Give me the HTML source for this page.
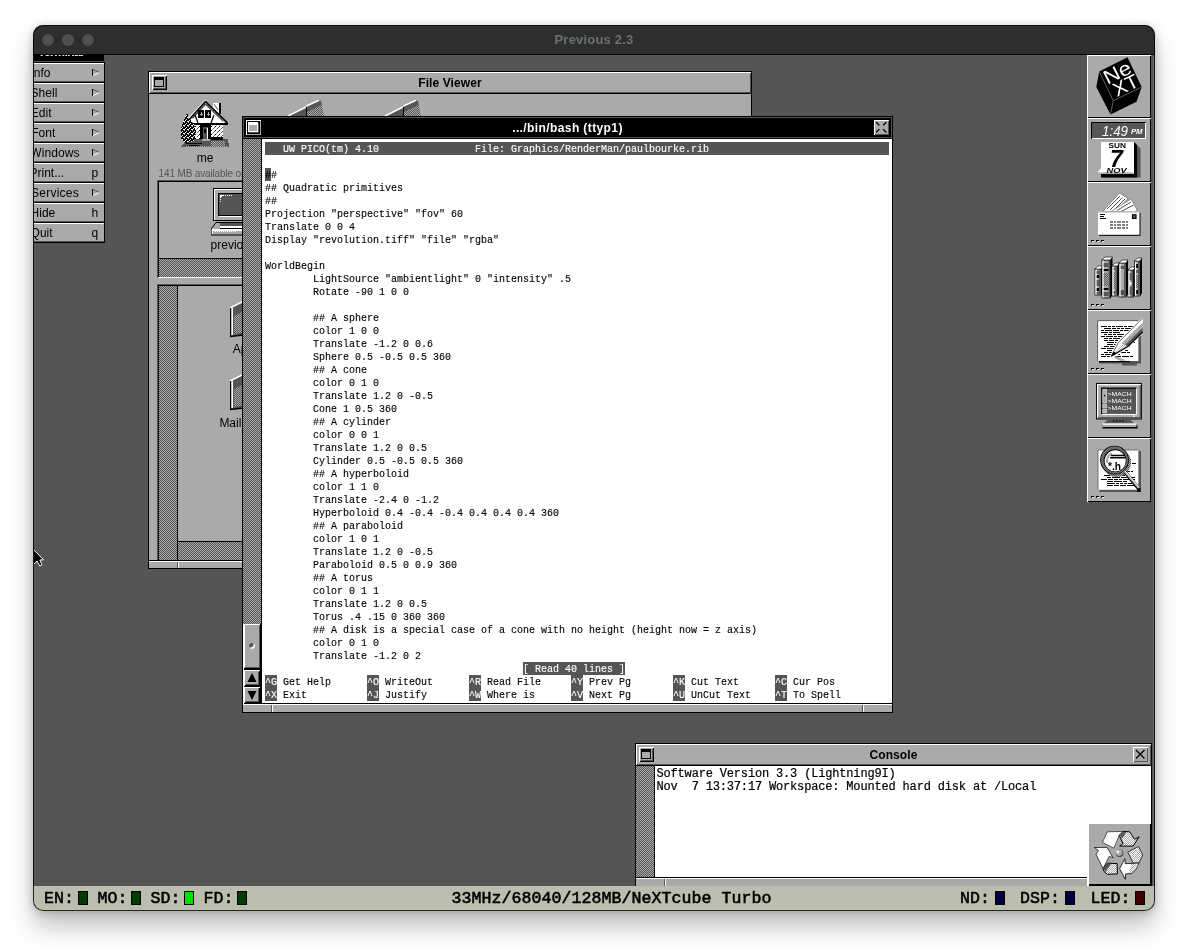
<!DOCTYPE html>
<html lang="en">
<head>
<meta charset="utf-8">
<title>Previous 2.3</title>
<style>
html,body{margin:0;padding:0;background:#fff;}
body{width:1188px;height:952px;position:relative;overflow:hidden;font-family:"Liberation Sans",sans-serif;font-size:12px;color:#000;}
.a{position:absolute;}
#shadow{left:33px;top:25px;width:1122px;height:886px;border-radius:10px;box-shadow:0 16px 24px rgba(0,0,0,.24),0 1px 9px rgba(0,0,0,.22);}
#win{left:33px;top:25px;width:1122px;height:886px;border-radius:10px;overflow:hidden;background:#555;}
#pg{left:-33px;top:-25px;width:1188px;height:952px;will-change:transform;}
/* macOS title bar */
#tbar{left:33px;top:25px;width:1122px;height:29px;background:#2d2f2f;}
#tbar .hl{left:0;top:0;width:100%;height:1px;background:#4a4c4c;}
.tl{width:12px;height:12px;border-radius:6px;background:#4e5050;top:9px;}
#ttl{left:0;top:0;width:100%;text-align:center;font-weight:bold;font-size:13px;line-height:29px;color:#6e7070;letter-spacing:.2px;}
#sep{left:33px;top:54px;width:1122px;height:1px;background:#000;}
/* NeXT desktop */
#desk{left:34px;top:55px;width:1117px;height:831px;background:#555;}
#rstrip{left:1151px;top:55px;width:4px;height:831px;background:#555;box-shadow:inset -2px 0 0 #686868;}
.dith{background:repeating-conic-gradient(#555 0 25%,#aaa 0 50%) 0 0/2px 2px;}
/* status bar */
#sbar{left:33px;top:886px;width:1122px;height:25px;background:#bcbdae;}
.st{font-family:"Liberation Mono",monospace;font-weight:normal;-webkit-text-stroke:.55px #000;font-size:16.6px;line-height:16px;top:891px;color:#000;white-space:pre;letter-spacing:.04px;}
.led{top:891px;width:8px;height:12px;border:1px solid #000;}
/* menu */
.mi{left:34px;width:70px;height:20px;background:#aaa;box-shadow:inset 0 1px 0 #fff,inset 0 -1px 0 #000,inset 0 -2px 0 #555;}
.mt{top:3px;line-height:14px;font-size:12px;white-space:pre;}
.mk{left:57.5px;top:3px;line-height:14px;font-size:12px;}
.mi svg{left:57px;top:6px;}
/* NeXT windows */
.nwin{background:#000;}
.ntb{left:1px;top:1px;height:21px;background:#aaa;box-shadow:inset 1px 1px 0 #fff,inset -1px -1px 0 #555;}
.ntb.act{background:#000;box-shadow:inset 1px 1px 0 #555,inset -1px -1px 0 #555;}
.ntt{left:0;top:.5px;width:100%;text-align:center;font-weight:bold;font-size:12px;line-height:21px;letter-spacing:.1px;}
.act .ntt{color:#fff;}
.btn{width:15px;height:15px;top:3px;}
.rb{height:7px;background:#aaa;box-shadow:inset 0 1px 0 #fff;}
.term{font-family:"Liberation Mono",monospace;white-space:pre;}
.r{font-size:10px;line-height:13px;height:13px;letter-spacing:0;-webkit-text-stroke:.12px currentColor;}
.rv{background:#555;color:#fff;}
.r span{position:relative;top:1px;}
.tile{left:1087px;width:64px;height:64px;background:#aaa;box-shadow:inset 1px 1px 0 #fff,inset -1px -1px 0 #000;}
</style>
</head>
<body>
<div id="shadow" class="a"></div>
<div id="win" class="a"><div id="pg" class="a">

<div id="desk" class="a"></div>
<div id="rstrip" class="a"></div>

<div class="a" style="left:34px;top:55px;width:70px;height:6px;background:#000"></div>
<div class="a" style="left:34px;top:61px;width:70px;height:1px;background:#555"></div>
<div class="a" style="left:34px;top:62px;width:71px;height:181px;background:#000"></div>
<div class="a" style="left:34px;top:55px;width:70px;height:1px;overflow:hidden"><div class="a" style="left:4px;top:-10px;color:#fff;font-weight:bold;font-size:12px;line-height:14px;white-space:pre;letter-spacing:-.5px">Terminal</div></div>
<div class="a mi" style="top:63px;overflow:hidden"><div class="a mt" style="left:-3.6px">Info</div><svg class="a" width="8" height="8" viewBox="0 0 8 8" shape-rendering="crispEdges"><path d="M1.5 0V7" stroke="#000" stroke-width="1" fill="none"/><path d="M2 0.5L8 3.3" stroke="#555" stroke-width="1" fill="none" shape-rendering="auto"/><path d="M2 6.6L8 3.8" stroke="#fff" stroke-width="1" fill="none" shape-rendering="auto"/></svg></div>
<div class="a mi" style="top:83px;overflow:hidden"><div class="a mt" style="left:-3.4px">Shell</div><svg class="a" width="8" height="8" viewBox="0 0 8 8" shape-rendering="crispEdges"><path d="M1.5 0V7" stroke="#000" stroke-width="1" fill="none"/><path d="M2 0.5L8 3.3" stroke="#555" stroke-width="1" fill="none" shape-rendering="auto"/><path d="M2 6.6L8 3.8" stroke="#fff" stroke-width="1" fill="none" shape-rendering="auto"/></svg></div>
<div class="a mi" style="top:103px;overflow:hidden"><div class="a mt" style="left:-3.2px">Edit</div><svg class="a" width="8" height="8" viewBox="0 0 8 8" shape-rendering="crispEdges"><path d="M1.5 0V7" stroke="#000" stroke-width="1" fill="none"/><path d="M2 0.5L8 3.3" stroke="#555" stroke-width="1" fill="none" shape-rendering="auto"/><path d="M2 6.6L8 3.8" stroke="#fff" stroke-width="1" fill="none" shape-rendering="auto"/></svg></div>
<div class="a mi" style="top:123px;overflow:hidden"><div class="a mt" style="left:-2.8px">Font</div><svg class="a" width="8" height="8" viewBox="0 0 8 8" shape-rendering="crispEdges"><path d="M1.5 0V7" stroke="#000" stroke-width="1" fill="none"/><path d="M2 0.5L8 3.3" stroke="#555" stroke-width="1" fill="none" shape-rendering="auto"/><path d="M2 6.6L8 3.8" stroke="#fff" stroke-width="1" fill="none" shape-rendering="auto"/></svg></div>
<div class="a mi" style="top:143px;overflow:hidden"><div class="a mt" style="left:-3.8px;letter-spacing:.1px">Windows</div><svg class="a" width="8" height="8" viewBox="0 0 8 8" shape-rendering="crispEdges"><path d="M1.5 0V7" stroke="#000" stroke-width="1" fill="none"/><path d="M2 0.5L8 3.3" stroke="#555" stroke-width="1" fill="none" shape-rendering="auto"/><path d="M2 6.6L8 3.8" stroke="#fff" stroke-width="1" fill="none" shape-rendering="auto"/></svg></div>
<div class="a mi" style="top:163px;overflow:hidden"><div class="a mt" style="left:-4.5px">Print...</div><div class="a mk">p</div></div>
<div class="a mi" style="top:183px;overflow:hidden"><div class="a mt" style="left:-3.0px;letter-spacing:.25px">Services</div><svg class="a" width="8" height="8" viewBox="0 0 8 8" shape-rendering="crispEdges"><path d="M1.5 0V7" stroke="#000" stroke-width="1" fill="none"/><path d="M2 0.5L8 3.3" stroke="#555" stroke-width="1" fill="none" shape-rendering="auto"/><path d="M2 6.6L8 3.8" stroke="#fff" stroke-width="1" fill="none" shape-rendering="auto"/></svg></div>
<div class="a mi" style="top:203px;overflow:hidden"><div class="a mt" style="left:-3.4px">Hide</div><div class="a mk">h</div></div>
<div class="a mi" style="top:223px;overflow:hidden"><div class="a mt" style="left:-3.4px">Quit</div><div class="a mk">q</div></div>


<div class="a nwin" id="fv" style="left:148px;top:71px;width:604px;height:498px;">
  <div class="a ntb" style="width:602px;">
    <div class="a ntt">File Viewer</div>
    <svg class="a btn" style="left:3px" width="15" height="15" viewBox="0 0 15 15" shape-rendering="crispEdges"><rect width="15" height="15" fill="#aaa"/><path d="M0 0H15V1H1V15H0Z" fill="#fff"/><path d="M15 1V15H1V14H14V1Z" fill="#000"/><path d="M14 2V14H2V13H13V2Z" fill="#555"/><rect x="2.5" y="2.5" width="9" height="9" fill="#aaa" stroke="#000" stroke-width="1"/><rect x="2" y="2" width="10" height="3" fill="#000"/></svg>
  </div>
  <div class="a" style="left:1px;top:23px;width:602px;height:466px;background:#aaa;overflow:hidden">
    <svg width="0" height="0" class="a" style="left:0;top:0"><defs>
<pattern id="pBW" width="2" height="2" patternUnits="userSpaceOnUse"><rect width="2" height="2" fill="#fff"/><rect width="1" height="1" fill="#000"/><rect x="1" y="1" width="1" height="1" fill="#000"/></pattern>
<pattern id="pWG" width="2" height="2" patternUnits="userSpaceOnUse"><rect width="2" height="2" fill="#fff"/><rect width="1" height="1" fill="#aaa"/><rect x="1" y="1" width="1" height="1" fill="#aaa"/></pattern>
<pattern id="pGD" width="2" height="2" patternUnits="userSpaceOnUse"><rect width="2" height="2" fill="#aaa"/><rect width="1" height="1" fill="#555"/><rect x="1" y="1" width="1" height="1" fill="#555"/></pattern>
<pattern id="pWD" width="2" height="2" patternUnits="userSpaceOnUse"><rect width="2" height="2" fill="#fff"/><rect width="1" height="1" fill="#555"/><rect x="1" y="1" width="1" height="1" fill="#555"/></pattern>
<pattern id="pTree" width="4" height="4" patternUnits="userSpaceOnUse"><rect width="4" height="4" fill="#000"/><rect x="0" y="0" width="1" height="1" fill="#fff"/><rect x="2" y="1" width="2" height="1" fill="#fff"/><rect x="1" y="3" width="1" height="1" fill="#fff"/><rect x="3" y="2" width="1" height="1" fill="#aaa"/></pattern>
<pattern id="pWall" width="4" height="4" patternUnits="userSpaceOnUse"><rect width="4" height="4" fill="#fff"/><rect x="0" y="0" width="1" height="1" fill="#555"/><rect x="2" y="2" width="1" height="1" fill="#000"/><rect x="3" y="1" width="1" height="1" fill="#aaa"/><rect x="1" y="3" width="1" height="1" fill="#555"/></pattern>
</defs></svg>
<svg class="a" style="left:32px;top:6px" width="48" height="48" viewBox="0 0 48 48" shape-rendering="crispEdges">
<polygon points="0,47 6,39 47,39 48,47" fill="#555"/>
<rect x="4" y="46" width="43" height="1" fill="url(#pGD)"/>
<rect x="30" y="41" width="14" height="5" fill="url(#pGD)"/>
<rect x="11" y="24" width="31" height="15" fill="url(#pWall)"/>
<rect x="19" y="25" width="11" height="14" fill="#000"/>
<rect x="22" y="27" width="5" height="12" fill="#555"/><rect x="26" y="28" width="1" height="11" fill="#fff"/><rect x="23" y="29" width="2" height="4" fill="#000"/>
<rect x="21" y="39" width="8" height="2" fill="#aaa"/>
<polygon points="24.5,2 10,18 10,24 43,24 43,21" fill="#fff"/>
<polygon points="32,3 39,3 39,14 32,8" fill="#fff"/><rect x="38" y="3" width="1.5" height="11" fill="#000"/><path d="M33 4L37 10" stroke="#555" stroke-width="1" shape-rendering="auto"/>
<path d="M24.5 0.4L8 18.2" stroke="#fff" stroke-width="1.3" shape-rendering="auto" fill="none"/>
<path d="M24.5 1.6L8.5 19.3M24.5 1.6L46.5 23" stroke="#000" stroke-width="1.7" shape-rendering="auto" fill="none"/>
<path d="M24.5 3.8L11.5 18.2M24.5 3.8L42.5 21" stroke="#555" stroke-width="1.8" shape-rendering="auto" fill="none"/>
<rect x="10" y="23" width="37" height="1.6" fill="#000"/>
<rect x="17" y="10" width="6" height="8" fill="#000"/><rect x="24" y="10" width="6" height="8" fill="#000"/>
<path d="M20 12V16M18.5 14H21.5M27 12V16M25.5 14H28.5" stroke="#aaa" stroke-width="1" fill="none"/>
<path d="M14 15L17 23M33 15L30 23" stroke="#000" stroke-width="1.2" shape-rendering="auto" fill="none"/>
<polygon points="6,13 8,18 13,24 15,33 13,41 4,43 0,38 0,28 3,20" fill="url(#pTree)"/>
<rect x="30" y="37" width="12" height="2.5" fill="#000"/>
<path d="M5 43h16M8 45h10" stroke="#000" stroke-width="1" fill="none"/>
</svg>
<div class="a" style="left:26px;top:56.5px;width:60px;text-align:center;line-height:14px;font-size:12px">me</div>
<div class="a" style="left:9.6px;top:74.3px;line-height:12px;font-size:10px;color:#555;white-space:pre;letter-spacing:-.15px">141 MB available on hard disk</div>
<!-- shelf folders -->
<svg class="a" style="left:131px;top:6px" width="48" height="48" viewBox="0 0 48 48">
<polygon points="8,16 26,7 26,42 8,44" fill="#555"/>
<polygon points="12,24 26,17 26,40 12,42" fill="url(#pGD)"/>
<polygon points="27,6.5 39,0.5 41,1 44,16 44,36 27,42" fill="url(#pGD)"/>
<polygon points="27,6.5 39,0.5 41,1 41.5,5 27,12" fill="#555"/>
<path d="M8 16L26 7" stroke="#fff" stroke-width="1.5"/>
<path d="M26.5 6L39 0.3" stroke="#fff" stroke-width="1.5"/>
<path d="M8.5 16V44M26.5 7V42" stroke="#000" stroke-width="1"/>
<path d="M10.2 16V43" stroke="#fff" stroke-width="1.6"/>
<path d="M8 44.5L26 42.5L44 36.5" stroke="#000" stroke-width="1.4" fill="none"/>
</svg><svg class="a" style="left:228px;top:6px" width="48" height="48" viewBox="0 0 48 48">
<polygon points="8,16 26,7 26,42 8,44" fill="#555"/>
<polygon points="12,24 26,17 26,40 12,42" fill="url(#pGD)"/>
<polygon points="27,6.5 39,0.5 41,1 44,16 44,36 27,42" fill="url(#pGD)"/>
<polygon points="27,6.5 39,0.5 41,1 41.5,5 27,12" fill="#555"/>
<path d="M8 16L26 7" stroke="#fff" stroke-width="1.5"/>
<path d="M26.5 6L39 0.3" stroke="#fff" stroke-width="1.5"/>
<path d="M8.5 16V44M26.5 7V42" stroke="#000" stroke-width="1"/>
<path d="M10.2 16V43" stroke="#fff" stroke-width="1.6"/>
<path d="M8 44.5L26 42.5L44 36.5" stroke="#000" stroke-width="1.4" fill="none"/>
</svg>
<!-- path box -->
<div class="a" style="left:8px;top:86px;width:586px;height:98px;background:#aaa;box-shadow:inset 1px 1px 0 #555,inset -1px -1px 0 #fff"></div>
<div class="a" style="left:9px;top:87px;width:584px;height:1px;background:#000"></div>
<div class="a" style="left:9px;top:87px;width:1px;height:96px;background:#000"></div>
<div class="a" style="left:10px;top:164px;width:583px;height:1px;background:#000"></div>
<div class="a dith" style="left:10px;top:165px;width:583px;height:18px"></div>
<svg class="a" style="left:62px;top:94px" width="48" height="48" viewBox="0 0 48 48" shape-rendering="crispEdges">
<rect x="2.5" y="0.5" width="42" height="32" fill="#aaa" stroke="#000" stroke-width="1"/>
<path d="M3 1.5H44M3.5 1V32" stroke="#fff" stroke-width="1.4" fill="none"/>
<rect x="7.5" y="5.5" width="33" height="22" fill="#555" stroke="#000" stroke-width="1"/>
<rect x="8" y="28" width="34" height="1.4" fill="#fff"/>
<path d="M9 7h4M9 8h2M9 9h1M14 7h1M16 7h1M18 7h1M20 7h1M9 11h1M9 13h1" stroke="#fff" stroke-width="1" fill="none"/>
<polygon points="0,41 5,34.5 47,34.5 47,47 0,47" fill="#aaa" stroke="#000" stroke-width="1" shape-rendering="auto"/>
<rect x="9" y="35" width="30" height="3" fill="#555"/>
<rect x="9" y="37.5" width="32" height="2" fill="#fff"/><rect x="9" y="39.5" width="32" height="1" fill="#000"/>
<rect x="1" y="41" width="46" height="1.5" fill="#fff"/>
<path d="M1.5 41V46" stroke="#fff" stroke-width="1" fill="none"/>
<path d="M4 43.5h22" stroke="#fff" stroke-width="1" stroke-dasharray="1 1" fill="none"/>
</svg>
<div class="a" style="left:61.6px;top:144px;line-height:14px;font-size:12px;white-space:pre">previous</div>
<!-- browser box -->
<div class="a" style="left:8px;top:190px;width:586px;height:280px;background:#aaa;box-shadow:inset 1px 1px 0 #555,inset -1px -1px 0 #fff"></div>
<div class="a" style="left:9px;top:191px;width:584px;height:1px;background:#000"></div>
<div class="a" style="left:9px;top:191px;width:1px;height:280px;background:#000"></div>
<div class="a dith" style="left:10px;top:192px;width:18px;height:280px"></div>
<div class="a" style="left:28px;top:192px;width:1px;height:280px;background:#000"></div>
<div class="a" style="left:29px;top:447px;width:565px;height:1px;background:#000"></div>
<div class="a dith" style="left:29px;top:448px;width:565px;height:20px"></div>
<svg class="a" style="left:73.4px;top:198.4px" width="48" height="48" viewBox="0 0 48 48">
<polygon points="8,16 26,7 26,42 8,44" fill="#555"/>
<polygon points="12,24 26,17 26,40 12,42" fill="url(#pGD)"/>
<polygon points="27,6.5 39,0.5 41,1 44,16 44,36 27,42" fill="url(#pGD)"/>
<polygon points="27,6.5 39,0.5 41,1 41.5,5 27,12" fill="#555"/>
<path d="M8 16L26 7" stroke="#fff" stroke-width="1.5"/>
<path d="M26.5 6L39 0.3" stroke="#fff" stroke-width="1.5"/>
<path d="M8.5 16V44M26.5 7V42" stroke="#000" stroke-width="1"/>
<path d="M10.2 16V43" stroke="#fff" stroke-width="1.6"/>
<path d="M8 44.5L26 42.5L44 36.5" stroke="#000" stroke-width="1.4" fill="none"/>
</svg>
<div class="a" style="left:67.4px;top:248px;width:60px;text-align:center;line-height:14px;font-size:12px">Apps</div>
<svg class="a" style="left:73.4px;top:271.4px" width="48" height="48" viewBox="0 0 48 48">
<polygon points="8,16 26,7 26,42 8,44" fill="#555"/>
<polygon points="12,24 26,17 26,40 12,42" fill="url(#pGD)"/>
<polygon points="27,6.5 39,0.5 41,1 44,16 44,36 27,42" fill="url(#pGD)"/>
<polygon points="27,6.5 39,0.5 41,1 41.5,5 27,12" fill="#555"/>
<path d="M8 16L26 7" stroke="#fff" stroke-width="1.5"/>
<path d="M26.5 6L39 0.3" stroke="#fff" stroke-width="1.5"/>
<path d="M8.5 16V44M26.5 7V42" stroke="#000" stroke-width="1"/>
<path d="M10.2 16V43" stroke="#fff" stroke-width="1.6"/>
<path d="M8 44.5L26 42.5L44 36.5" stroke="#000" stroke-width="1.4" fill="none"/>
</svg>
<div class="a" style="left:57.4px;top:321.5px;width:80px;text-align:center;line-height:14px;font-size:12px">Mailboxes</div>

  </div>
  <div class="a rb" style="left:1px;top:490px;width:602px;"></div>
  <div class="a" style="left:29px;top:491px;width:1px;height:6px;background:#555"></div>
  <div class="a" style="left:30px;top:491px;width:1px;height:6px;background:#fff"></div>
  <div class="a" style="left:573px;top:491px;width:1px;height:6px;background:#555"></div>
  <div class="a" style="left:574px;top:491px;width:1px;height:6px;background:#fff"></div>
</div>

<div class="a nwin" id="tw" style="left:242px;top:116px;width:651px;height:597px;">
  <div class="a ntb act" style="width:649px;"><div class="a ntt" style="letter-spacing:.4px">.../bin/bash (ttyp1)</div>
    <svg class="a btn" style="left:3px" width="15" height="15" viewBox="0 0 15 15" shape-rendering="crispEdges"><rect width="15" height="15" fill="#000"/><path d="M0 0H15V1H1V15H0Z" fill="#fff"/><path d="M15 1V15H1V14H14V1Z" fill="#aaa"/><rect x="2.5" y="2.5" width="9" height="9" fill="#aaa" stroke="#fff" stroke-width="1"/><rect x="2" y="2" width="10" height="3" fill="#fff"/><path d="M12 3V12H3" fill="none" stroke="#555" stroke-width="1"/></svg>
    <svg class="a btn" style="left:631px" width="15" height="15" viewBox="0 0 15 15" shape-rendering="crispEdges"><rect width="15" height="15" fill="#aaa"/><path d="M0 0H15V1H1V15H0Z" fill="#fff"/><path d="M15 1V15H1V14H14V1Z" fill="#555"/><path d="M2.5 2.5L5 5M12 2.5L9.5 5M2.5 12L5 9.5M12 12L9.5 9.5" stroke="#000" stroke-width="1.2" stroke-linecap="round" shape-rendering="auto"/></svg>
  </div>
  <div class="a dith" style="left:1px;top:23px;width:18px;height:565px"></div>
  <div class="a" style="left:1px;top:508px;width:18px;height:80px;background:#000"></div><div class="a" style="left:1px;top:508px;width:1px;height:80px;background:#fff"></div><div class="a" style="left:2px;top:508px;width:16px;height:44px;background:#aaa;box-shadow:inset 1px 1px 0 #fff,inset -1px -1px 0 #555"></div>
  <div class="a" style="left:7px;top:527px;width:6px;height:6px;border-radius:3px;background:#555;box-shadow:inset -1.5px -1.5px 0 #fff"></div>
  <svg class="a" style="left:2px;top:554px" width="16" height="16" viewBox="0 0 16 16" shape-rendering="crispEdges"><rect width="16" height="16" fill="#aaa"/><path d="M0 0H16V1H1V16H0Z" fill="#fff"/><path d="M16 1V16H1V15H15V1Z" fill="#000"/><path d="M14 2V14H2" fill="none" stroke="#555"/><polygon points="8,3 12.5,12 3.5,12" fill="#000" shape-rendering="auto"/></svg>
  <svg class="a" style="left:2px;top:571px" width="16" height="16" viewBox="0 0 16 16" shape-rendering="crispEdges"><rect width="16" height="16" fill="#aaa"/><path d="M0 0H16V1H1V16H0Z" fill="#fff"/><path d="M16 1V16H1V15H15V1Z" fill="#000"/><path d="M14 2V14H2" fill="none" stroke="#555"/><polygon points="8,13 12.5,4 3.5,4" fill="#000" shape-rendering="auto"/></svg>
  <div class="a term" id="tt" style="left:20px;top:23px;width:630px;height:564px;background:#fff;overflow:hidden">
<div class="a r rv" style="top:3px;left:3px;width:624px"><span>   UW PICO(tm) 4.10                File: Graphics/RenderMan/paulbourke.rib</span></div>
<div class="a" style="left:3px;top:29px;width:6px;height:13px;background:#555"></div>
<div class="a r" style="top:29px;left:3px"><span>##</span></div>
<div class="a r" style="top:42px;left:3px"><span>## Quadratic primitives</span></div>
<div class="a r" style="top:55px;left:3px"><span>##</span></div>
<div class="a r" style="top:68px;left:3px"><span>Projection "perspective" "fov" 60</span></div>
<div class="a r" style="top:81px;left:3px"><span>Translate 0 0 4</span></div>
<div class="a r" style="top:94px;left:3px"><span>Display "revolution.tiff" "file" "rgba"</span></div>
<div class="a r" style="top:120px;left:3px"><span>WorldBegin</span></div>
<div class="a r" style="top:133px;left:3px"><span>        LightSource "ambientlight" 0 "intensity" .5</span></div>
<div class="a r" style="top:146px;left:3px"><span>        Rotate -90 1 0 0</span></div>
<div class="a r" style="top:172px;left:3px"><span>        ## A sphere</span></div>
<div class="a r" style="top:185px;left:3px"><span>        color 1 0 0</span></div>
<div class="a r" style="top:198px;left:3px"><span>        Translate -1.2 0 0.6</span></div>
<div class="a r" style="top:211px;left:3px"><span>        Sphere 0.5 -0.5 0.5 360</span></div>
<div class="a r" style="top:224px;left:3px"><span>        ## A cone</span></div>
<div class="a r" style="top:237px;left:3px"><span>        color 0 1 0</span></div>
<div class="a r" style="top:250px;left:3px"><span>        Translate 1.2 0 -0.5</span></div>
<div class="a r" style="top:263px;left:3px"><span>        Cone 1 0.5 360</span></div>
<div class="a r" style="top:276px;left:3px"><span>        ## A cylinder</span></div>
<div class="a r" style="top:289px;left:3px"><span>        color 0 0 1</span></div>
<div class="a r" style="top:302px;left:3px"><span>        Translate 1.2 0 0.5</span></div>
<div class="a r" style="top:315px;left:3px"><span>        Cylinder 0.5 -0.5 0.5 360</span></div>
<div class="a r" style="top:328px;left:3px"><span>        ## A hyperboloid</span></div>
<div class="a r" style="top:341px;left:3px"><span>        color 1 1 0</span></div>
<div class="a r" style="top:354px;left:3px"><span>        Translate -2.4 0 -1.2</span></div>
<div class="a r" style="top:367px;left:3px"><span>        Hyperboloid 0.4 -0.4 -0.4 0.4 0.4 0.4 360</span></div>
<div class="a r" style="top:380px;left:3px"><span>        ## A paraboloid</span></div>
<div class="a r" style="top:393px;left:3px"><span>        color 1 0 1</span></div>
<div class="a r" style="top:406px;left:3px"><span>        Translate 1.2 0 -0.5</span></div>
<div class="a r" style="top:419px;left:3px"><span>        Paraboloid 0.5 0 0.9 360</span></div>
<div class="a r" style="top:432px;left:3px"><span>        ## A torus</span></div>
<div class="a r" style="top:445px;left:3px"><span>        color 0 1 1</span></div>
<div class="a r" style="top:458px;left:3px"><span>        Translate 1.2 0 0.5</span></div>
<div class="a r" style="top:471px;left:3px"><span>        Torus .4 .15 0 360 360</span></div>
<div class="a r" style="top:484px;left:3px"><span>        ## A disk is a special case of a cone with no height (height now = z axis)</span></div>
<div class="a r" style="top:497px;left:3px"><span>        color 0 1 0</span></div>
<div class="a r" style="top:510px;left:3px"><span>        Translate -1.2 0 2</span></div>
<div class="a r rv" style="top:523px;left:261px;width:102px"><span>[ Read 40 lines ]</span></div>
<div class="a r rv" style="top:536px;left:3px;width:12px"><span>^G</span></div><div class="a r" style="top:536px;left:21px"><span>Get Help</span></div>
<div class="a r rv" style="top:536px;left:105px;width:12px"><span>^O</span></div><div class="a r" style="top:536px;left:123px"><span>WriteOut</span></div>
<div class="a r rv" style="top:536px;left:207px;width:12px"><span>^R</span></div><div class="a r" style="top:536px;left:225px"><span>Read File</span></div>
<div class="a r rv" style="top:536px;left:309px;width:12px"><span>^Y</span></div><div class="a r" style="top:536px;left:327px"><span>Prev Pg</span></div>
<div class="a r rv" style="top:536px;left:411px;width:12px"><span>^K</span></div><div class="a r" style="top:536px;left:429px"><span>Cut Text</span></div>
<div class="a r rv" style="top:536px;left:513px;width:12px"><span>^C</span></div><div class="a r" style="top:536px;left:531px"><span>Cur Pos</span></div>
<div class="a r rv" style="top:549px;left:3px;width:12px"><span>^X</span></div><div class="a r" style="top:549px;left:21px"><span>Exit</span></div>
<div class="a r rv" style="top:549px;left:105px;width:12px"><span>^J</span></div><div class="a r" style="top:549px;left:123px"><span>Justify</span></div>
<div class="a r rv" style="top:549px;left:207px;width:12px"><span>^W</span></div><div class="a r" style="top:549px;left:225px"><span>Where is</span></div>
<div class="a r rv" style="top:549px;left:309px;width:12px"><span>^V</span></div><div class="a r" style="top:549px;left:327px"><span>Next Pg</span></div>
<div class="a r rv" style="top:549px;left:411px;width:12px"><span>^U</span></div><div class="a r" style="top:549px;left:429px"><span>UnCut Text</span></div>
<div class="a r rv" style="top:549px;left:513px;width:12px"><span>^T</span></div><div class="a r" style="top:549px;left:531px"><span>To Spell</span></div>
  </div>
  <div class="a rb" style="left:1px;top:588px;width:649px;height:8px"></div>
  <div class="a" style="left:29px;top:589px;width:1px;height:7px;background:#555"></div><div class="a" style="left:30px;top:589px;width:1px;height:7px;background:#fff"></div>
  <div class="a" style="left:620px;top:589px;width:1px;height:7px;background:#555"></div><div class="a" style="left:621px;top:589px;width:1px;height:7px;background:#fff"></div>
</div>

<div class="a nwin" id="cw" style="left:635px;top:743px;width:517px;height:143px;">
  <div class="a ntb" style="width:515px;"><div class="a ntt">Console</div>
    <svg class="a btn" style="left:3px" width="15" height="15" viewBox="0 0 15 15" shape-rendering="crispEdges"><rect width="15" height="15" fill="#aaa"/><path d="M0 0H15V1H1V15H0Z" fill="#fff"/><path d="M15 1V15H1V14H14V1Z" fill="#000"/><path d="M14 2V14H2V13H13V2Z" fill="#555"/><rect x="2.5" y="2.5" width="9" height="9" fill="#aaa" stroke="#000" stroke-width="1"/><rect x="2" y="2" width="10" height="3" fill="#000"/></svg>
    <svg class="a btn" style="left:497px" width="15" height="15" viewBox="0 0 15 15" shape-rendering="crispEdges"><rect width="15" height="15" fill="#aaa"/><path d="M0 0H15V1H1V15H0Z" fill="#fff"/><path d="M15 1V15H1V14H14V1Z" fill="#555"/><path d="M3 3L11.5 11.5M11.5 3L3 11.5" stroke="#000" stroke-width="1.3" shape-rendering="auto"/></svg>
  </div>
  <div class="a dith" style="left:1px;top:23px;width:18px;height:111px"></div>
  <div class="a" style="left:20px;top:23px;width:496px;height:111px;background:#fff;overflow:hidden;font-family:'Liberation Mono',monospace;font-size:12px;line-height:13px;white-space:pre;letter-spacing:-.17px;-webkit-text-stroke:.2px #000"><div class="a" style="left:1.5px;top:1.5px">Software Version 3.3 (Lightning9I)
Nov  7 13:37:17 Workspace: Mounted hard disk at /Local</div></div>
  <div class="a rb" style="left:1px;top:135px;width:515px;height:8px"></div>
  <div class="a" style="left:29px;top:136px;width:1px;height:7px;background:#555"></div><div class="a" style="left:30px;top:136px;width:1px;height:7px;background:#fff"></div>
</div>

<div class="a tile" id="t0" style="top:55px;height:63px"><svg class="a" style="left:0;top:0" width="64" height="63" viewBox="0 0 64 63">
<polygon points="40.5,2.2 54.7,32 49.5,46.7 23.5,59.4 9.3,32 12.2,16.4" fill="#000"/>
<path d="M12.2 16.4L26.3 45.7L54.7 32M26.3 45.7L23.5 59.4" stroke="#777" stroke-width=".8" fill="none"/>
<g transform="translate(12.2,16.4) rotate(-26.6)" fill="#fff" font-family="Liberation Sans, sans-serif" font-size="19.5">
<text x="1.5" y="15.8" textLength="28.5" lengthAdjust="spacingAndGlyphs">Ne</text>
<text x="4.5" y="31" textLength="26" lengthAdjust="spacingAndGlyphs">XT</text>
</g>
</svg></div>
<div class="a tile" id="t1" style="top:118px;height:64px"><div class="a" style="left:4px;top:4px;width:55px;height:17px;background:#555;box-shadow:inset 1px 1px 0 #000,inset -1px -1px 0 #fff"></div>
<svg class="a" style="left:0;top:0" width="64" height="64" viewBox="0 0 64 64">
<g fill="#fff" font-family="Liberation Sans, sans-serif" font-style="italic">
<text x="15" y="17.6" font-size="14" textLength="26" lengthAdjust="spacingAndGlyphs">1:49</text>
<text x="44" y="16" font-size="7.5" font-weight="bold" textLength="11.5" lengthAdjust="spacingAndGlyphs">PM</text>
</g>
<polygon points="47,24 53.5,30.5 53.5,59.5 18,59.5 14,56 47,56" fill="#555"/>
<polygon points="47,24 50,27 50,59.5 14,59.5 14,56 47,56" fill="#000"/>
<polygon points="14,24 47,24 47,56 45.5,54.5 10.5,54.5 14,50" fill="#fff"/>
<path d="M12 55.3H46" stroke="#aaa" stroke-width="1"/>
<g fill="#000" font-family="Liberation Sans, sans-serif" font-weight="bold" text-anchor="middle">
<text x="30.3" y="29.9" font-size="7" textLength="17.5" lengthAdjust="spacingAndGlyphs">SUN</text>
<text x="29.5" y="48.8" font-size="23" font-style="italic">7</text>
<text x="29.6" y="54.9" font-size="7" font-style="italic" textLength="20" lengthAdjust="spacingAndGlyphs">NOV</text>
</g>
</svg></div>
<div class="a tile" id="t2" style="top:182px;height:64px"><svg class="a" style="left:0;top:0" width="64" height="64" viewBox="0 0 64 64">
<polygon points="16,29 32.4,11 41,16.5 28,30" fill="#fff" stroke="#555" stroke-width=".6"/>
<path d="M20 27L33 14M23 28L35.5 15.5M26 29L38 17" stroke="#000" stroke-width=".7"/>
<polygon points="24,29.5 44.1,16.8 50,27.8 48,30" fill="#fff" stroke="#555" stroke-width=".6"/>
<path d="M30 28.5L44 20M34 29.5L46.5 23" stroke="#000" stroke-width=".7"/>
<rect x="12" y="30.7" width="41.5" height="23.1" fill="#000"/>
<rect x="11" y="29.7" width="41.5" height="23.1" fill="#fff"/>
<rect x="11" y="29.7" width="41.5" height=".8" fill="#aaa"/>
<rect x="44.9" y="32.2" width="4.7" height="4.8" fill="#000"/><rect x="46" y="33.3" width="2.5" height="2.6" fill="#555"/>
<path d="M13 32.5h5M13 34.5h4M13 36.5h6" stroke="#000" stroke-width="1"/>
<path d="M23 40h18M23 43h19M23 46h18" stroke="#000" stroke-width="1.2" stroke-dasharray="3 1 2 1 4 1"/>
<path d="M4 58h3v2h-3zM9 58h3v2h-3zM14 58h3v2h-3z" fill="#000" shape-rendering="crispEdges"/><path d="M5 59h2v1h-2zM10 59h2v1h-2zM15 59h2v1h-2z" fill="#fff" shape-rendering="crispEdges"/>
</svg></div>
<div class="a tile" id="t3" style="top:246px;height:64px"><svg class="a" style="left:0;top:0" width="64" height="64" viewBox="0 0 64 64"><rect x="8" y="23" width="6" height="26" fill="#aaa" stroke="#000" stroke-width=".8"/><rect x="8.4" y="23.4" width="1.3" height="25.2" fill="#fff"/><rect x="12" y="23.4" width="1.6" height="25.2" fill="#555"/><rect x="9.7" y="25" width="2.3" height="3" fill="#555"/><rect x="9.7" y="29" width="2.3" height="3" fill="#000"/><rect x="9.7" y="34" width="2.3" height="6" fill="#555"/><rect x="9.7" y="42" width="2.3" height="3" fill="#000"/><rect x="9.7" y="46" width="2.3" height="2" fill="#555"/><polygon points="8,23 11,20 16,20 14,23" fill="#fff" stroke="#000" stroke-width=".6"/><polygon points="14,23 16,20 16,46 14,49" fill="#000"/><rect x="15" y="14" width="8.5" height="38" fill="#aaa" stroke="#000" stroke-width=".8"/><rect x="15.4" y="14.4" width="1.3" height="37.2" fill="#fff"/><rect x="21.5" y="14.4" width="1.6" height="37.2" fill="#555"/><rect x="16.7" y="17" width="4.8" height="4" fill="#555"/><rect x="16.7" y="23" width="4.8" height="2" fill="#000"/><rect x="16.7" y="27" width="4.8" height="13" fill="url(#pGD)"/><rect x="16.7" y="42" width="4.8" height="2" fill="#000"/><rect x="16.7" y="46" width="4.8" height="4" fill="#555"/><polygon points="15,14 18,11 25.5,11 23.5,14" fill="#fff" stroke="#000" stroke-width=".6"/><polygon points="23.5,14 25.5,11 25.5,49 23.5,52" fill="#000"/><rect x="25" y="20" width="5.5" height="30" fill="#aaa" stroke="#000" stroke-width=".8"/><rect x="25.4" y="20.4" width="1.3" height="29.2" fill="#fff"/><rect x="28.5" y="20.4" width="1.6" height="29.2" fill="#555"/><rect x="26.7" y="22" width="1.7999999999999998" height="2" fill="#555"/><rect x="26.7" y="26" width="1.7999999999999998" height="17" fill="url(#pGD)"/><rect x="26.7" y="45" width="1.7999999999999998" height="3" fill="#555"/><polygon points="25,20 28,17 32.5,17 30.5,20" fill="#fff" stroke="#000" stroke-width=".6"/><polygon points="30.5,20 32.5,17 32.5,47 30.5,50" fill="#000"/><rect x="32" y="17" width="7" height="34" fill="#aaa" stroke="#000" stroke-width=".8"/><rect x="32.4" y="17.4" width="1.3" height="33.2" fill="#fff"/><rect x="37" y="17.4" width="1.6" height="33.2" fill="#555"/><rect x="33.7" y="20" width="3.3" height="3" fill="#555"/><rect x="33.7" y="25" width="3.3" height="18" fill="#aaa"/><rect x="33.7" y="44" width="3.3" height="5" fill="#555"/><polygon points="32,17 35,14 41,14 39,17" fill="#fff" stroke="#000" stroke-width=".6"/><polygon points="39,17 41,14 41,48 39,51" fill="#000"/><rect x="41" y="24" width="5.5" height="27" fill="#aaa" stroke="#000" stroke-width=".8"/><rect x="41.4" y="24.4" width="1.3" height="26.2" fill="#fff"/><rect x="44.5" y="24.4" width="1.6" height="26.2" fill="#555"/><rect x="42.7" y="27" width="1.7999999999999998" height="7" fill="#555"/><rect x="42.7" y="36" width="1.7999999999999998" height="3" fill="#fff"/><rect x="42.7" y="41" width="1.7999999999999998" height="8" fill="#555"/><polygon points="41,24 44,21 48.5,21 46.5,24" fill="#fff" stroke="#000" stroke-width=".6"/><polygon points="46.5,24 48.5,21 48.5,48 46.5,51" fill="#000"/><rect x="47.5" y="15" width="5.5" height="35" fill="#aaa" stroke="#000" stroke-width=".8"/><rect x="47.9" y="15.4" width="1.3" height="34.2" fill="#fff"/><rect x="51" y="15.4" width="1.6" height="34.2" fill="#555"/><rect x="49.2" y="18" width="1.7999999999999998" height="4" fill="#000"/><rect x="49.2" y="24" width="1.7999999999999998" height="3" fill="#555"/><rect x="49.2" y="29" width="1.7999999999999998" height="13" fill="url(#pGD)"/><rect x="49.2" y="44" width="1.7999999999999998" height="4" fill="#000"/><polygon points="47.5,15 50.5,12 55,12 53,15" fill="#fff" stroke="#000" stroke-width=".6"/><polygon points="53,15 55,12 55,47 53,50" fill="#000"/><path d="M4 58h3v2h-3zM9 58h3v2h-3zM14 58h3v2h-3z" fill="#000" shape-rendering="crispEdges"/><path d="M5 59h2v1h-2zM10 59h2v1h-2zM15 59h2v1h-2z" fill="#fff" shape-rendering="crispEdges"/></svg></div>
<div class="a tile" id="t4" style="top:310px;height:64px"><svg class="a" style="left:0;top:0" width="64" height="64" viewBox="0 0 64 64"><polygon points="51.3,26 54,26 54,53.5 50,53.5 50,55.5 35,55.5 35,53.5 12,53.5 12,51 51.3,51" fill="#555"/><rect x="12" y="51" width="31" height="1.2" fill="#000"/><rect x="10.1" y="10.1" width="41.2" height="40.9" fill="#fff"/><path d="M10.6 51V10.6H51.3" stroke="#555" stroke-width="1" fill="none"/><path d="M14 16.5h6M21 16.5h3M25 16.5h3M29 16.5h7M37 16.5h3M41 16.5h5M17 18.5h7M25 18.5h4M30 18.5h3M34 18.5h3M38 18.5h6M45 18.5h3M14 20.5h3M18 20.5h7M26 20.5h6M33 20.5h3M37 20.5h7M45 20.5h3M14 22.5h7M22 22.5h3M26 22.5h7M17 24.5h3M21 24.5h4M26 24.5h3M30 24.5h7M38 24.5h4M14 26.5h4M19 26.5h7M27 26.5h3M31 26.5h7M39 26.5h4M17 28.5h4M22 28.5h3M26 28.5h7M17 30.5h4M22 30.5h5M28 30.5h3M32 30.5h2M20 32.5h7M28 32.5h3M32 32.5h7M40 32.5h4M45 32.5h3M20 34.5h6M27 34.5h5M33 34.5h6M17 36.5h5M23 36.5h5M29 36.5h4M34 36.5h4M39 36.5h4M14 38.5h5M20 38.5h7M28 38.5h6M35 38.5h4M20 40.5h5M26 40.5h7M34 40.5h3M38 40.5h3M17 42.5h4M22 42.5h5M28 42.5h4M33 42.5h6M40 42.5h3M14 44.5h3M18 44.5h7M26 44.5h7M14 46.5h5M20 46.5h7M28 46.5h6M35 46.5h7M43 46.5h3" stroke="#000" stroke-width="1" fill="none" shape-rendering="crispEdges"/><polygon points="24.5,46.8 30,46.6 39,50.4 33.5,51" fill="#aaa"/><polygon points="55.7,7 55.7,23.5 41,38 26,48 22.5,47 30,31.5" fill="#fff"/><polygon points="55.7,8.1 55.7,12.5 34.4,33.6 31.5,32.3" fill="#fff"/><polygon points="55.7,12.5 55.7,17.5 37.7,35 34.4,33.6" fill="#aaa"/><polygon points="55.7,17.5 55.7,21.8 40.8,36.4 37.7,35" fill="#555"/><polygon points="31.5,32.3 40.8,36.4 24.2,46.3" fill="url(#pWG)"/><polygon points="31.5,32.3 35.5,34 24.2,46.3" fill="#fff"/><polygon points="26.6,41.6 29.6,43.2 24.2,46.3" fill="#000"/><path d="M55.7 8.1L31.5 32.3L24.2 46.3" stroke="#000" stroke-width=".6" fill="none"/><path d="M55.7 22L40.8 36.6L24.2 46.3" stroke="#000" stroke-width="1.3" fill="none"/><path d="M4 58h3v2h-3zM9 58h3v2h-3zM14 58h3v2h-3z" fill="#000" shape-rendering="crispEdges"/><path d="M5 59h2v1h-2zM10 59h2v1h-2zM15 59h2v1h-2z" fill="#fff" shape-rendering="crispEdges"/></svg></div>
<div class="a tile" id="t5" style="top:374px;height:64px"><svg class="a" style="left:0;top:0" width="64" height="64" viewBox="0 0 64 64">
<rect x="9.6" y="9.4" width="44.8" height="35.6" fill="#aaa" stroke="#000" stroke-width="1"/>
<path d="M10.6 44V10.6H54" stroke="#fff" stroke-width="1.2" fill="none"/>
<path d="M11 43.6H53.2V11" stroke="#555" stroke-width="1.2" fill="none"/>
<rect x="14.7" y="14.2" width="34.6" height="25.8" fill="#555"/>
<path d="M14.7 40V14.2H49.3" stroke="#000" stroke-width="1.2" fill="none"/>
<path d="M15 40.4H49.6V14.6" stroke="#fff" stroke-width="1" fill="none"/>
<rect x="15.8" y="15.5" width="3.8" height="13.5" fill="#aaa" stroke="#fff" stroke-width=".5"/>
<rect x="15.8" y="30.5" width="3.8" height="3.5" fill="#aaa" stroke="#fff" stroke-width=".5"/>
<rect x="15.8" y="35.3" width="3.8" height="3.5" fill="#aaa" stroke="#fff" stroke-width=".5"/>
<rect x="17" y="21" width="1.2" height="1.2" fill="#000"/>
<g fill="#fff" font-family="Liberation Sans, sans-serif" font-size="6">
<text x="20.6" y="21.7" textLength="24" lengthAdjust="spacingAndGlyphs">&gt;MACH</text>
<text x="20.6" y="28.8" textLength="24" lengthAdjust="spacingAndGlyphs">&gt;MACH</text>
<text x="20.6" y="35.9" textLength="24" lengthAdjust="spacingAndGlyphs">&gt;MACH</text>
</g>
<rect x="46" y="41.5" width="2" height="1.2" fill="#fff"/>
<polygon points="21,45.5 43,45.5 48,50 16,50" fill="#555"/>
<path d="M26 47h12" stroke="#000" stroke-width="1.2" stroke-dasharray="2 1"/>
<polygon points="15.5,50 50,50 50.8,54.4 15.5,54.4" fill="#000"/>
<polygon points="15.5,49.6 49.5,49.6 49.5,53 15.5,53" fill="#aaa"/>
<rect x="15.5" y="49.4" width="34" height="1.4" fill="#fff"/>
</svg></div>
<div class="a tile" id="t6" style="top:438px;height:64px"><svg class="a" style="left:0;top:0" width="64" height="64" viewBox="0 0 64 64"><polygon points="51.3,13 54,13 54,54 12.5,54 12.5,51.7 51.3,51.7" fill="#555"/><rect x="10.4" y="11.4" width="40.9" height="40.3" fill="#fff"/><path d="M10.9 51.7V11.9H51.3" stroke="#555" stroke-width="1" fill="none"/><path d="M17 37.5h6M24 37.5h6M31 37.5h7M20 39.5h4M25 39.5h8M34 39.5h6M41 39.5h7M14 41.5h6M21 41.5h5M27 41.5h4M32 41.5h3M36 41.5h8M45 41.5h3M20 43.5h6M27 43.5h8M36 43.5h4M20 45.5h8M29 45.5h3M33 45.5h3M37 45.5h3M41 45.5h4M46 45.5h2M20 47.5h6M27 47.5h5M33 47.5h6M40 47.5h8" stroke="#000" stroke-width="1" fill="none" shape-rendering="crispEdges"/><path d="M38 21.5h6M38 25.5h6M45 25.5h4M38 33.5h5M44 33.5h2" stroke="#000" stroke-width="1" fill="none" shape-rendering="crispEdges"/><circle cx="29.5" cy="24.5" r="14.4" fill="url(#pGD)"/><circle cx="27.5" cy="22.1" r="14.4" fill="#000"/><circle cx="27.5" cy="22.1" r="13.5" fill="url(#pGD)"/><circle cx="27.5" cy="22.1" r="13.5" fill="#555" opacity=".45"/><circle cx="28" cy="22.6" r="11.4" fill="#000"/><circle cx="28.2" cy="22.9" r="10.6" fill="#fff"/><path d="M20 25Q19 17.5 25 15.5" stroke="#aaa" stroke-width="2.2" fill="none"/><path d="M24 17.5h14M23 19.7h15" stroke="#000" stroke-width="1.5" fill="none"/><text x="21" y="31.5" font-family="Liberation Sans, sans-serif" font-weight="bold" font-size="11.8" textLength="13" lengthAdjust="spacingAndGlyphs" fill="#000">*.h</text><path d="M38 34.2L52.3 51.3" stroke="#000" stroke-width="3.6" stroke-linecap="butt"/><path d="M37.6 33.4L52 50.4" stroke="#aaa" stroke-width="1.8"/><path d="M38 32.8L52.2 49.4" stroke="#fff" stroke-width="1"/><rect x="50.4" y="50.6" width="3.2" height="3.4" fill="#000"/><path d="M4 58h3v2h-3zM9 58h3v2h-3zM14 58h3v2h-3z" fill="#000" shape-rendering="crispEdges"/><path d="M5 59h2v1h-2zM10 59h2v1h-2zM15 59h2v1h-2z" fill="#fff" shape-rendering="crispEdges"/></svg></div>
<div class="a tile" id="t7" style="top:822px;height:64px;box-shadow:inset 2px 2px 0 #fff,inset -1px -2px 0 #000"><svg class="a" style="left:0;top:0" width="64" height="64" viewBox="0 0 64 64" stroke-linejoin="round">
<polygon points="15.4,20.5 20.4,9.8 36.1,9.4 32.2,13.4 26.9,26.2" fill="#fff" stroke="#000" stroke-width=".6"/>
<polygon points="32.2,13.4 36.1,9.4 42.6,9.8 47.6,17.3 52.2,14.8 46.1,24.1 32.6,24.1 36.1,21.6" fill="url(#pWG)" stroke="#000" stroke-width="1"/>
<polygon points="32.8,13.6 36.3,10 39.5,10 35,16.5" fill="#555"/>
<polygon points="40.8,30.1 51.5,24.4 55.8,33 51.9,40.9 46.1,40.9" fill="url(#pWG)" stroke="#000" stroke-width=".7"/>
<polygon points="32.6,46.6 37.9,36.6 38.3,41.6 51.9,41.2 49,47.3 44.7,51.6 38.6,51.9 38.3,57.3" fill="#fff" stroke="#000" stroke-width=".8"/>
<polygon points="44,42 51.4,41.7 48.6,47 44.5,51 42,51" fill="url(#pWG)"/>
<polygon points="16.1,46.6 20.4,41.2 30.1,41.6 30.4,51.9 20.4,52.3 16.9,49.4" fill="url(#pWG)" stroke="#000" stroke-width="1"/>
<polygon points="16.6,46.8 20.6,41.8 24,42 18.5,50" fill="#555"/>
<polygon points="7.2,25.5 20.1,25.5 26.1,35.9 22.2,34.4 16.1,46.6 9,32.3 11.5,28.4" fill="#fff" stroke="#000" stroke-width=".7"/>
<circle cx="32.6" cy="31.2" r="3.9" fill="#555"/>
<circle cx="32" cy="30.6" r="3.3" fill="#aaa"/>
<circle cx="30.8" cy="29.8" r="1.4" fill="#fff"/>
</svg></div>


<svg class="a" style="left:34px;top:544px" width="14" height="26" viewBox="34 544 14 26"><polygon points="30,546.2 43.6,559.8 39.8,560 42,564.6 39.8,566 37,561 31,567" fill="#000" stroke="#fff" stroke-width="1" stroke-linejoin="miter"/></svg>
<!-- macOS title bar -->
<div id="tbar" class="a">
  <div class="a hl"></div>
  <div class="a tl" style="left:9px"></div>
  <div class="a tl" style="left:29px"></div>
  <div class="a tl" style="left:49px"></div>
  <div id="ttl" class="a">Previous 2.3</div>
</div>
<div id="sep" class="a"></div>

<!-- status bar -->
<div id="sbar" class="a"></div>

<div class="a st" style="left:44px">EN:</div><div class="a led" style="left:78px;background:#003c00"></div>
<div class="a st" style="left:97.5px">MO:</div><div class="a led" style="left:131px;background:#003c00"></div>
<div class="a st" style="left:150.5px">SD:</div><div class="a led" style="left:184px;background:#00e000"></div>
<div class="a st" style="left:203.5px">FD:</div><div class="a led" style="left:237px;background:#003c00"></div>
<div class="a st" style="left:451.5px">33MHz/68040/128MB/NeXTcube Turbo</div>
<div class="a st" style="left:960px">ND:</div><div class="a led" style="left:995px;background:#000040"></div>
<div class="a st" style="left:1020px">DSP:</div><div class="a led" style="left:1065px;background:#000040"></div>
<div class="a st" style="left:1090.5px">LED:</div><div class="a led" style="left:1135px;background:#400000"></div>


<div class="a" style="left:33px;top:25px;width:1122px;height:886px;border-radius:10px;box-shadow:inset 0 0 0 1px rgba(0,0,0,.8);pointer-events:none"></div>
</div></div>
</body>
</html>
